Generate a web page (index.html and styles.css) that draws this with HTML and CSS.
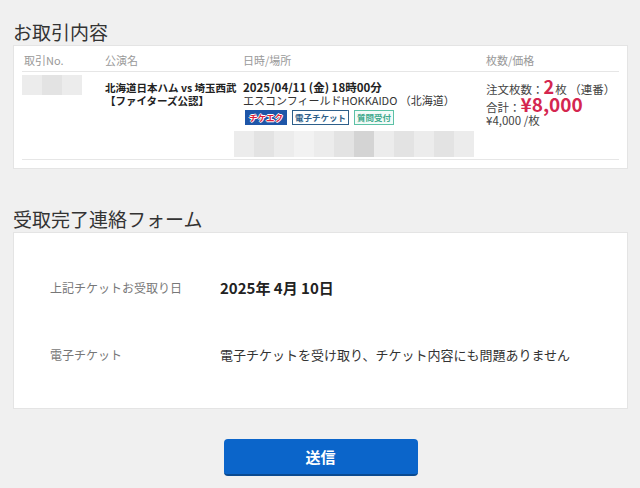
FILE: index.html
```html
<!DOCTYPE html>
<html lang="ja">
<head>
    <meta charset="UTF-8">
    <meta name="viewport" content="width=device-width, initial-scale=1.0">
    <title>受取完了連絡フォーム</title>
    <link rel="stylesheet" href="styles.css">
</head>
<body>
    <div class="page">
        <h2 class="ttl">お取引内容</h2>
        <div class="card order">
            <div class="grid head">
                <div>取引No.</div>
                <div>公演名</div>
                <div>日時/場所</div>
                <div>枚数/価格</div>
            </div>
            <div class="grid row">
                <div>
                    <div class="mosaic no">
                        <span class="m1"></span><span class="m2"></span><span class="m1"></span>
                    </div>
                </div>
                <div class="event">
                    <div>北海道日本ハム vs 埼玉西武</div>
                    <div>【ファイターズ公認】</div>
                </div>
                <div class="place">
                    <div class="date">2025/04/11 (金) 18時00分</div>
                    <div class="venue">エスコンフィールドHOKKAIDO （北海道）</div>
                    <div class="badges">
                        <span class="badge tikeeku">チケエク</span>
                        <span class="badge eticket">電子チケット</span>
                        <span class="badge question">質問受付</span>
                    </div>
                    <div class="mosaic seat">
                        <span class="m1"></span><span class="m2"></span><span class="m1"></span><span class="m3"></span><span class="m1"></span><span class="m2"></span><span class="m4"></span><span class="m1"></span><span class="m2"></span><span class="m1"></span><span class="m2"></span><span class="m1"></span>
                    </div>
                </div>
                <div class="price">
                    <div class="p1">注文枚数：<span class="num">2</span>枚 （連番）</div>
                    <div class="p2">合計：<span class="total">¥8,000</span></div>
                    <div class="p3">¥4,000 /枚</div>
                </div>
            </div>
        </div>

        <h2 class="ttl second">受取完了連絡フォーム</h2>
        <div class="card form">
            <div class="frow">
                <div class="flabel">上記チケットお受取り日</div>
                <div class="fvalue big">2025年 4月 10日</div>
            </div>
            <div class="frow">
                <div class="flabel">電子チケット</div>
                <div class="fvalue">電子チケットを受け取り、チケット内容にも問題ありません</div>
            </div>
        </div>

        <div class="actions">
            <button class="btn" type="button">送信</button>
        </div>
    </div>
</body>
</html>
```

FILE: styles.css
```css
body {
    margin: 0;
    background-color: #f0f0f0;
    font-family: "Noto Sans CJK JP", "Noto Sans", sans-serif;
    color: #333;
}

.page {
    padding: 18px 12px 20px 13px;
}

.ttl {
    margin: 0;
    font-size: 19px;
    font-weight: normal;
    line-height: 27px;
    color: #333;
}

.ttl.second {
    margin-top: 37px;
    line-height: 26px;
}

.card {
    background-color: #fff;
    border: 1px solid #e4e4e4;
}

.order {
    padding: 0 8px 8px;
}

.grid {
    display: grid;
    grid-template-columns: 81px 138px 243px 1fr;
}

.grid > div {
    padding-left: 2px;
    white-space: nowrap;
}

.head {
    font-size: 11px;
    line-height: 16px;
    color: #999;
    padding: 6px 0 3px;
    border-bottom: 1px solid #e6e6e6;
}

.row {
    padding: 9px 0 2px;
    border-bottom: 1px solid #e6e6e6;
    font-size: 11.5px;
    line-height: 13px;
}

.row > div:first-child {
    padding-left: 0;
}

.mosaic {
    display: flex;
}

.mosaic span {
    flex: 1;
    height: 100%;
}

.m1 { background-color: #ececec; }
.m2 { background-color: #e3e3e3; }
.m3 { background-color: #f2f2f2; }
.m4 { background-color: #d4d4d4; }

.no {
    width: 60px;
    height: 20px;
    margin-top: -6px;
}

.event {
    font-size: 10.5px;
    font-weight: bold;
    color: #222;
}

.place {
    color: #333;
}

.date {
    font-weight: bold;
    color: #222;
}

.venue {
    font-size: 11px;
}

.badges {
    display: flex;
    gap: 5px;
    margin-top: 3px;
    padding-left: 2px;
}

.badge {
    font-size: 8.5px;
    font-weight: bold;
    line-height: 13px;
    padding: 0 2px;
    border: 1px solid;
}

.tikeeku {
    background-color: #1e56a8;
    border-color: #1e56a8;
    color: #e0203a;
    text-shadow: 1px 0 #fff, -1px 0 #fff, 0 1px #fff, 0 -1px #fff;
    padding: 0 3px;
}

.eticket {
    border-color: #2e5f8a;
    color: #2e5f8a;
}

.question {
    border-color: #5cc1a6;
    color: #3fa98c;
    background-color: #f3fbf8;
}

.seat {
    width: 240px;
    height: 26px;
    margin: 6px 0 0 -9px;
}

.price {
    color: #444;
    font-size: 11.5px;
}

.p1 {
    display: flex;
    align-items: baseline;
    height: 15px;
    line-height: 15px;
    margin-top: -2px;
}

.p2 {
    display: flex;
    align-items: baseline;
    height: 19px;
    line-height: 19px;
}

.p3 {
    height: 15px;
    line-height: 15px;
}

.num {
    font-size: 18px;
    font-weight: bold;
    color: #d4264f;
    margin-right: 1px;
}

.total {
    font-size: 19px;
    font-weight: bold;
    color: #d4264f;
}

.form {
    padding: 40px 36px 40px;
}

.frow {
    display: grid;
    grid-template-columns: 170px 1fr;
    align-items: center;
    height: 28px;
}

.frow + .frow {
    margin-top: 39px;
}

.flabel {
    font-size: 12px;
    color: #777;
}

.fvalue {
    font-size: 13px;
    color: #333;
}

.fvalue.big {
    font-size: 15px;
    font-weight: bold;
    color: #222;
}

.actions {
    display: flex;
    justify-content: center;
    margin-top: 30px;
}

.btn {
    width: 194px;
    height: 37px;
    background-color: #0b65ca;
    border: none;
    border-bottom: 2px solid #0a4a90;
    border-radius: 4px;
    color: #fff;
    font-family: inherit;
    font-size: 15px;
    font-weight: bold;
    cursor: pointer;
}
```
